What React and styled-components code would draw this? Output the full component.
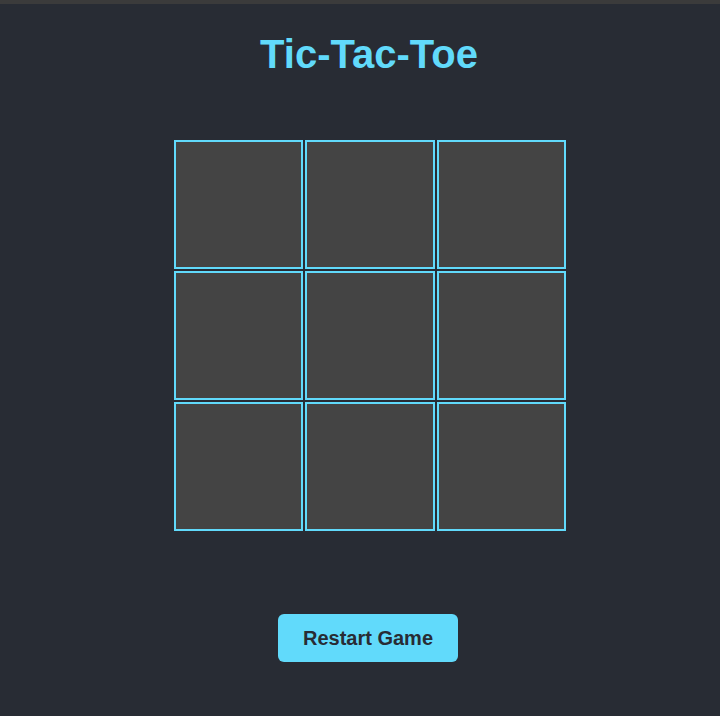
import React, { useState } from 'react'
import styled, { createGlobalStyle } from 'styled-components'

const GlobalStyle = createGlobalStyle`
  html, body {
    margin: 0;
    padding: 0;
    background-color: #3b3b3b;
  }
  body {
    padding-top: 4px;
    font-family: "Liberation Sans", Arial, sans-serif;
  }
`

const Container = styled.div`
  min-height: 712px;
  box-sizing: border-box;
  background-color: #282c34;
  display: flex;
  flex-direction: column;
  align-items: center;
  padding-left: 18px;
`

const Title = styled.h1`
  margin: 28px 0 0;
  font-size: 40px;
  line-height: 45px;
  font-weight: bold;
  color: #61dafb;
`

const Board = styled.div`
  margin: 63px 0 0 2px;
  width: 392px;
  display: grid;
  grid-template-columns: repeat(3, 1fr);
  grid-template-rows: repeat(3, 129px);
  gap: 2px;
`

const Cell = styled.button`
  box-sizing: border-box;
  background-color: #444;
  border: 2px solid #61dafb;
  padding: 0;
  color: #61dafb;
  font-family: inherit;
  font-size: 64px;
  font-weight: bold;
  cursor: pointer;
`

const RestartButton = styled.button`
  margin: 83px 2px 0 0;
  width: 180px;
  height: 48px;
  border: none;
  border-radius: 6px;
  background-color: #61dafb;
  color: #282c34;
  font-family: inherit;
  font-size: 20px;
  font-weight: bold;
  cursor: pointer;
`

const App = () => {
  const [cells, setCells] = useState(Array(9).fill(null))
  const [xNext, setXNext] = useState(true)

  const play = (i) => {
    if (cells[i]) return
    const next = cells.slice()
    next[i] = xNext ? 'X' : 'O'
    setCells(next)
    setXNext(!xNext)
  }

  const restart = () => {
    setCells(Array(9).fill(null))
    setXNext(true)
  }

  return (
    <Container>
      <GlobalStyle />
      <Title>Tic-Tac-Toe</Title>
      <Board>
        {cells.map((value, i) => (
          <Cell key={i} onClick={() => play(i)}>{value}</Cell>
        ))}
      </Board>
      <RestartButton onClick={restart}>Restart Game</RestartButton>
    </Container>
  )
}

export default App
